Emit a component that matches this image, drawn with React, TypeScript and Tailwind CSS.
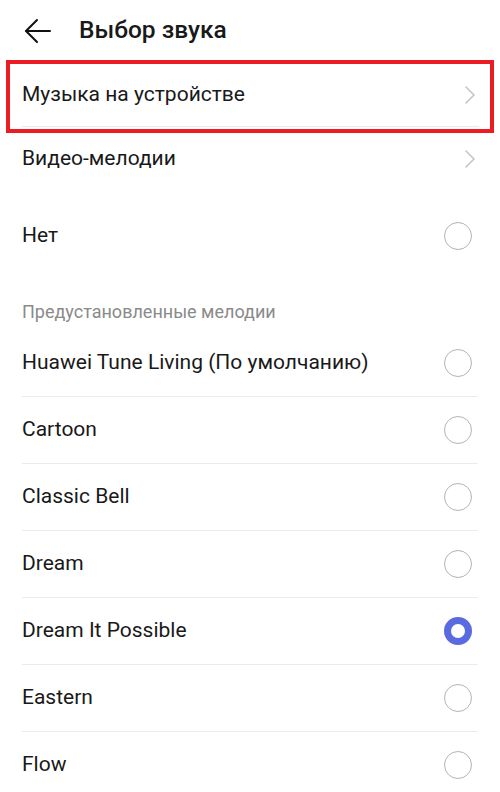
import { Fragment } from 'react';

const font = { fontFamily: 'Roboto, "Noto Sans", "Liberation Sans", sans-serif' };

const presets = [
  'Huawei Tune Living (По умолчанию)',
  'Cartoon',
  'Classic Bell',
  'Dream',
  'Dream It Possible',
  'Eastern',
  'Flow',
];

const selected = 'Dream It Possible';

function BackArrow() {
  return (
    <svg width="28" height="28" viewBox="0 0 28 28" fill="none" stroke="#111" strokeWidth="2" strokeLinecap="round" strokeLinejoin="round">
      <path d="M2 14h24" />
      <path d="M13 3L2 14l11 11" />
    </svg>
  );
}

function Chevron() {
  return (
    <svg width="10" height="18" viewBox="0 0 10 18" fill="none" stroke="#c4c4c4" strokeWidth="1.6" strokeLinecap="round" strokeLinejoin="round">
      <path d="M1 1l8 8-8 8" />
    </svg>
  );
}

function Radio({ on }: { on: boolean }) {
  if (on) {
    return <div className="h-[28px] w-[28px] rounded-full border-[7px] border-[#5a6be0] bg-white" />;
  }
  return <div className="h-[28px] w-[28px] rounded-full border-[1.5px] border-[#b4b4b4]" />;
}

export default function App() {
  return (
    <div className="w-[500px] h-[792px] overflow-hidden bg-white text-[#191919]" style={font}>
      <header className="flex h-[60px] items-center">
        <div className="ml-[24px] mt-[2px] flex">
          <BackArrow />
        </div>
        <h1 className="ml-[27px] text-[24.5px] font-medium leading-none">Выбор звука</h1>
      </header>

      {/* highlighted entry */}
      <div className="mx-[6px] h-[73px] border-4 border-[#ec1c24]">
        <div className="flex h-[62px] items-center justify-between pl-[12px] pr-[15px]">
          <span className="text-[21px]">Музыка на устройстве</span>
          <Chevron />
        </div>
        <div className="ml-[12px] mr-[11px] h-px bg-[#ebebeb]" />
      </div>

      <div className="flex h-[52px] items-center justify-between pl-[22px] pr-[25px]">
        <span className="text-[21px]">Видео-мелодии</span>
        <Chevron />
      </div>

      <div className="mt-[19px] flex h-[64px] items-center justify-between pl-[22px] pr-[28px]">
        <span className="text-[21px]">Нет</span>
        <Radio on={false} />
      </div>

      <div className="flex h-[62px] items-end pb-[7px] pl-[22px]">
        <span className="text-[18px] leading-[22px] text-[#8a8a8a]">Предустановленные мелодии</span>
      </div>

      <div>
        {presets.map((name, i) => (
          <Fragment key={name}>
            {i > 0 && <div className="mx-[22px] h-px bg-[#ebebeb]" />}
            <div className="flex h-[66px] items-center justify-between pl-[22px] pr-[28px]">
              <span className="text-[21px]">{name}</span>
              <Radio on={name === selected} />
            </div>
          </Fragment>
        ))}
      </div>
    </div>
  );
}
